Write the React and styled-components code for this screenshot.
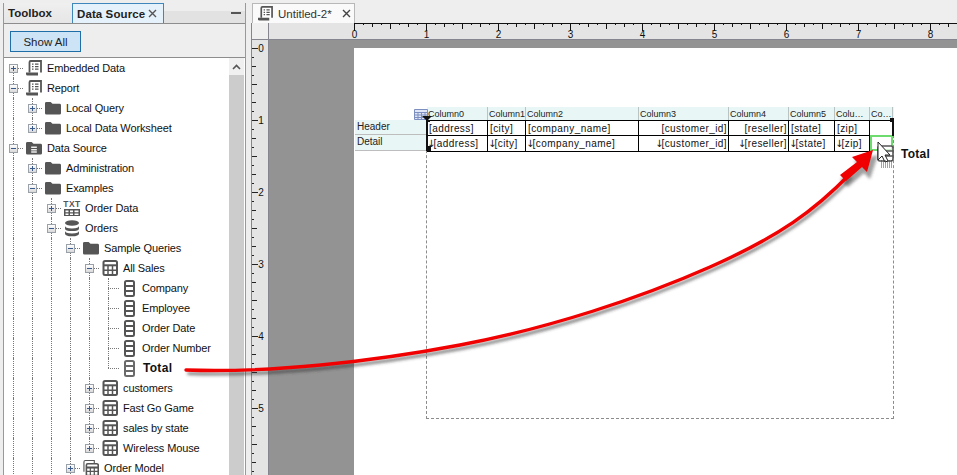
import React from "react";
import styled, { createGlobalStyle } from "styled-components";

const Global = createGlobalStyle`
  html, body { margin: 0; padding: 0; background: #eeeeee; }
  #root { width: 957px; height: 475px; overflow: hidden; }
`;

const INK = "#555555";

const Frame = styled.div`
  position: relative;
  width: 957px;
  height: 475px;
  display: flex;
  overflow: hidden;
  background: #eeeeee;
  font-family: "Liberation Sans", Arial, sans-serif;
  font-size: 11px;
  color: #111;
`;

const SidePanel = styled.section`
  width: 241px;
  margin: 3px 0 0 3px;
  display: flex;
  flex-direction: column;
  border-left: 1px solid #999;
  border-right: 1px solid #999;
`;

const PanelTabs = styled.div`
  height: 20px;
  flex: none;
  display: flex;
  border-bottom: 1px solid #8d8d8d;
  background: linear-gradient(#eeeeee 0 40%, #e2e2e2 40% 100%);
`;

const PanelTab = styled.div`
  display: flex;
  align-items: center;
  height: 20px;
  box-sizing: border-box;
  flex: none;
  white-space: nowrap;
  width: ${(p) => p.$w}px;
  padding: 0 6px 0 4px;
  font-size: 11.5px;
  font-weight: bold;
  letter-spacing: ${(p) => (p.$active ? 0.1 : 0)}px;
  color: #222;
  background: ${(p) => (p.$active ? "#e6f2fb" : "linear-gradient(#efefef,#e6e6e6)")};
  ${(p) => p.$active && "border: 1px solid #3f86ba; border-bottom: none;"}
  & > svg { margin-left: auto; }
`;

const PanelMin = styled.div`
  margin: 9px 4px 0 auto;
  width: 10px;
  height: 2px;
  background: #555;
`;

const Toolbar = styled.div`
  height: 34px;
  flex: none;
  padding: 7px 0 0 6px;
  box-sizing: border-box;
  border-bottom: 1px solid #8d8d8d;
  background: #eeeeee;
`;

const ShowAll = styled.button`
  display: block;
  width: 71px;
  height: 21px;
  padding: 0;
  box-sizing: border-box;
  border: 1px solid #1f6ea8;
  background: #cde4f7;
  font: 11.5px "Liberation Sans", Arial, sans-serif;
  color: #222;
`;

const TreeArea = styled.div`
  flex: 1;
  display: flex;
  min-height: 0;
  background: #fff;
`;

const TreeList = styled.ul`
  flex: 1;
  margin: 0;
  padding: 0;
  list-style: none;
  overflow: hidden;
`;

const Row = styled.li`
  position: relative;
  height: 20px;
  display: flex;
  align-items: center;
  padding-left: ${(p) => 22 + p.$level * 19}px;
  white-space: nowrap;
  font-size: ${(p) => (p.$bold ? 12 : 11)}px;
  letter-spacing: ${(p) => (p.$bold ? 0.3 : -0.12)}px;
  font-weight: ${(p) => (p.$bold ? "bold" : "normal")};
  color: #111;
`;

const Guide = styled.i`
  position: absolute;
  left: ${(p) => 9 + p.$level * 19}px;
  top: ${(p) => (p.$start ? 10 : 0)}px;
  height: ${(p) => (p.$half ? 10 : p.$start ? 10 : 20)}px;
  border-left: 1px dotted #777;
`;

const Connector = styled.i`
  position: absolute;
  left: ${(p) => 9 + p.$level * 19}px;
  top: 10px;
  width: ${(p) => (p.$leaf ? 11 : 10)}px;
  border-top: 1px dotted #777;
`;

const Expander = styled.span`
  position: absolute;
  left: ${(p) => 5 + p.$level * 19}px;
  top: 6px;
  width: 9px;
  height: 9px;
  box-sizing: border-box;
  border: 1px solid #9ba1a8;
  background: linear-gradient(#fff, #d9d9d9);
  &::before {
    content: "";
    position: absolute;
    left: 1px;
    top: 3px;
    width: 5px;
    height: 1px;
    background: #3a5a8c;
  }
  &::after {
    content: "";
    display: ${(p) => (p.$open ? "none" : "block")};
    position: absolute;
    left: 3px;
    top: 1px;
    width: 1px;
    height: 5px;
    background: #3a5a8c;
  }
`;

const IconSlot = styled.span`
  width: 16px;
  height: 18px;
  margin-right: ${(p) => (p.$wide ? 6 : 5)}px;
  display: flex;
  align-items: center;
  justify-content: center;
  flex: none;
`;

const Scrollbar = styled.div`
  width: 15px;
  margin-right: 1px;
  background: #cccccc;
  display: flex;
  flex-direction: column;
`;

const ScrollUp = styled.div`
  height: 17px;
  background: #f0f0f0;
  display: flex;
  align-items: center;
  justify-content: center;
`;

const MainPanel = styled.section`
  flex: 1;
  margin-left: 5px;
  display: flex;
  flex-direction: column;
  min-width: 0;
`;

const DocTabs = styled.div`
  height: 20px;
  flex: none;
  margin-top: 3px;
  display: flex;
  padding-left: 1px;
`;

const DocTab = styled.div`
  width: 103px;
  box-sizing: border-box;
  padding-left: 5px;
  display: flex;
  align-items: center;
  white-space: nowrap;
  background: #fafafa;
  border-top: 1px solid #b8b8b8;
  border-right: 1px solid #b8b8b8;
  border-left: 1px solid #b8b8b8;
`;

const DocTitle = styled.span`
  margin: 0 0 0 5px;
  color: #333;
  font-size: 11.5px;
`;

const DocClose = styled.span`
  margin: 0 3px 0 auto;
  display: flex;
`;

const Workspace = styled.div`
  flex: 1;
  display: grid;
  grid-template-columns: 17px 1fr;
  grid-template-rows: 17px 1fr;
  min-height: 0;
  border-left: 1px solid #85858f;
`;

const RulerCorner = styled.div`
  background: #efefef;
  border-right: 1px solid #85858f;
  border-bottom: 1px solid #85858f;
`;

const HorizontalRuler = styled.div`
  background: #e4e4e4;
  border-bottom: 1px solid #85858f;
  overflow: hidden;
`;

const VerticalRuler = styled.div`
  background: #e4e4e4;
  border-right: 1px solid #85858f;
  overflow: hidden;
`;

const Canvas = styled.div`
  background: #939393;
  padding: 8px 0 0 85px;
  min-height: 0;
  overflow: hidden;
`;

const Page = styled.div`
  background: #fff;
  height: 500px;
  display: grid;
  grid-template-columns: 72px 1fr;
`;

const BandLabels = styled.div`
  padding: 72px 0 0 1px;
`;

const BandLabel = styled.div`
  height: ${(p) => p.$h}px;
  box-sizing: border-box;
  background: #e8f6f6;
  border-bottom: 1px solid #bdbdbd;
  font-size: 10px;
  line-height: 14px;
  padding-left: 2px;
  color: #222;
`;

const ReportColumn = styled.div`
  padding-top: 59px;
  width: 468px;
`;

const ColumnHead = styled.div`
  position: relative;
  height: 13px;
  margin-left: 1px;
  display: grid;
  grid-template-columns: ${(p) => p.$cols};
  background: #e8f6f6;
`;

const ColumnName = styled.div`
  font-size: 9px;
  line-height: 15px;
  padding-left: 1px;
  border-right: 1px solid #b8c4c4;
  overflow: hidden;
  white-space: nowrap;
  color: #222;
`;

const BodyFrame = styled.div`
  position: relative;
  height: 299px;
  box-sizing: border-box;
  border-left: 1px dashed #8c8c8c;
  border-right: 1px dashed #8c8c8c;
  border-bottom: 1px dashed #8c8c8c;
`;

const DataGrid = styled.div`
  display: grid;
  grid-template-columns: ${(p) => p.$cols};
  border-top: 1px solid #000;
`;

const DataCell = styled.div`
  height: ${(p) => p.$h}px;
  box-sizing: border-box;
  border-bottom: 1px solid #000;
  border-right: ${(p) => (p.$last ? "none" : "1px solid #000")};
  font-size: 10px;
  line-height: 15px;
  letter-spacing: 0.42px;
  padding: 0 ${(p) => (p.$right ? 1 : 0)}px 0 2px;
  text-align: ${(p) => (p.$right ? "right" : "left")};
  white-space: nowrap;
  overflow: hidden;
  color: #111;
`;

const DownMark = styled.span`
  font-family: "DejaVu Sans", sans-serif;
  font-size: 10px;
  line-height: 0;
  margin-left: -2px;
  letter-spacing: -1.8px;
`;

const SelectedCell = styled(DataCell)`
  border: 2px solid #6ddb6d;
  margin: -1px 0 0 0;
  height: 16px;
`;

const Handle = styled.i`
  position: absolute;
  left: ${(p) => p.$x}px;
  top: ${(p) => p.$y}px;
  width: ${(p) => p.$w || 4}px;
  height: ${(p) => p.$h || 4}px;
  background: #111;
`;

const TableBadge = styled.span`
  position: absolute;
  left: -13px;
  top: 2px;
  display: flex;
`;

const Caret = styled.i`
  position: absolute;
  left: -5px;
  top: 9px;
  width: 0;
  height: 0;
  border-left: 5px solid transparent;
  border-right: 5px solid transparent;
  border-top: 5px solid #111;
`;

const DragLabel = styled.b`
  position: absolute;
  left: 901px;
  top: 147px;
  font-size: 12px;
  letter-spacing: 0.25px;
`;

const Overlay = styled.svg`
  position: absolute;
  left: 0;
  top: 0;
  pointer-events: none;
`;

const ReportIcon = ({ size = 16 }) => (
  <svg width={size} height={size} viewBox="0 0 16 16">
    <path d="M3.5 12.5V2.2Q3.5 1 4.7 1H15v11.5" fill="#fff" stroke={INK} strokeWidth="1.8" />
    <path d="M0 12.5h12v3H1.5Q0 15.5 0 14z" fill={INK} />
    <path d="M6 4.2h1.5M9 4.2h3.5M6 6.7h1.5M9 6.7h3.5M6 9.2h1.5M9 9.2h3.5" stroke={INK} strokeWidth="1.3" />
  </svg>
);

const FolderIcon = () => (
  <svg width="17" height="16" viewBox="0 0 17 16">
    <path d="M0 3q0-1.5 1.5-1.5h4.5l2 2h7.5q1.5 0 1.5 1.5v8.5q0 1.5-1.5 1.5h-14q-1.5 0-1.5-1.5z" fill={INK} />
  </svg>
);

const SourceIcon = () => (
  <svg width="17" height="16" viewBox="0 0 17 16">
    <path d="M0 3q0-1.5 1.5-1.5h4.5l2 2h7.5q1.5 0 1.5 1.5v8.5q0 1.5-1.5 1.5h-14q-1.5 0-1.5-1.5z" fill={INK} />
    <path d="M5.5 6.5h6v1.6h-6zM5.5 9h6v1.6h-6zM5.5 11.5h6V13h-6z" fill="#eee" />
  </svg>
);

const TxtIcon = () => (
  <svg width="18" height="18" viewBox="0 0 18 18" style={{ flex: "none" }}>
    <text x="9" y="7.5" textAnchor="middle" fontFamily="Liberation Sans" fontWeight="bold" fontSize="8.5" letterSpacing="0.5" fill={INK}>TXT</text>
    <path d="M1 10h16v7H1z" fill={INK} />
    <path d="M2.5 11.5h3v1.8h-3zM7 11.5h3v1.8H7zM11.5 11.5h4v1.8h-4zM2.5 14.5h3v1.4h-3zM7 14.5h3v1.4H7zM11.5 14.5h4v1.4h-4z" fill="#fff" />
  </svg>
);

const DbIcon = () => (
  <svg width="16" height="17" viewBox="0 0 16 17">
    <ellipse cx="8" cy="3" rx="7" ry="2.8" fill={INK} />
    <path d="M1 5.8q0 2.6 7 2.6t7-2.6v2.6q0 2.6-7 2.6T1 8.4z" fill={INK} />
    <path d="M1 10.8q0 2.6 7 2.6t7-2.6v2.6q0 2.8-7 2.8T1 13.4z" fill={INK} />
  </svg>
);

const TableIcon = () => (
  <svg width="16" height="16" viewBox="0 0 16 16">
    <rect x="1.5" y="1" width="13.5" height="14" rx="1.5" fill="#fff" stroke={INK} strokeWidth="2" />
    <path d="M1.5 5.3h13.5" stroke={INK} strokeWidth="2" />
    <path d="M1.5 10.2h13.5M6 5v10M10.5 5v10" stroke={INK} strokeWidth="1.5" />
  </svg>
);

const FieldIcon = ({ soft }) => (
  <svg width="11" height="17" viewBox="0 0 11 17">
    <rect x="1" y="1" width="9" height="15" rx="1.5" fill="#fff" stroke={soft ? "#6a6a6a" : INK} strokeWidth="2" />
    <path d="M1 6h9M1 11h9" stroke={soft ? "#6a6a6a" : INK} strokeWidth="1.8" />
  </svg>
);

const ModelIcon = () => (
  <svg width="17" height="18" viewBox="0 0 17 18">
    <path d="M1 13V2.5Q1 1 2.5 1H12v3" fill="none" stroke={INK} strokeWidth="1.2" />
    <rect x="3.6" y="4.5" width="12.6" height="12.6" rx="1.5" fill="#fff" stroke={INK} strokeWidth="1.7" />
    <path d="M3.6 8.5h12.6" stroke={INK} strokeWidth="2.2" />
    <path d="M3.6 12.5h12.6M7.8 8v9M12 8v9" stroke={INK} strokeWidth="1.3" />
  </svg>
);

const CloseIcon = ({ c = "#555" }) => (
  <svg width="9" height="9" viewBox="0 0 9 9" style={{ flex: "none" }}>
    <path d="M1 1l7 7M8 1L1 8" stroke={c} strokeWidth="1.4" />
  </svg>
);

const icons = {
  report: <ReportIcon />,
  folder: <FolderIcon />,
  source: <SourceIcon />,
  txt: <TxtIcon />,
  db: <DbIcon />,
  table: <TableIcon />,
  field: <FieldIcon />,
  soft: <FieldIcon soft />,
  model: <ModelIcon />,
};

const rows = [
  { level: 0, label: "Embedded Data", icon: "report", exp: "plus", first: true },
  { level: 0, label: "Report", icon: "report", exp: "minus" },
  { level: 1, label: "Local Query", icon: "folder", exp: "plus" },
  { level: 1, label: "Local Data Worksheet", icon: "folder", exp: "plus", last: true },
  { level: 0, label: "Data Source", icon: "source", exp: "minus" },
  { level: 1, label: "Administration", icon: "folder", exp: "plus" },
  { level: 1, label: "Examples", icon: "folder", exp: "minus" },
  { level: 2, label: "Order Data", icon: "txt", exp: "plus" },
  { level: 2, label: "Orders", icon: "db", exp: "minus" },
  { level: 3, label: "Sample Queries", icon: "folder", exp: "minus" },
  { level: 4, label: "All Sales", icon: "table", exp: "minus" },
  { level: 5, label: "Company", icon: "field" },
  { level: 5, label: "Employee", icon: "field" },
  { level: 5, label: "Order Date", icon: "field" },
  { level: 5, label: "Order Number", icon: "field" },
  { level: 5, label: "Total", icon: "soft", bold: true, last: true },
  { level: 4, label: "customers", icon: "table", exp: "plus" },
  { level: 4, label: "Fast Go Game", icon: "table", exp: "plus" },
  { level: 4, label: "sales by state", icon: "table", exp: "plus" },
  { level: 4, label: "Wireless Mouse", icon: "table", exp: "plus", last: true },
  { level: 3, label: "Order Model", icon: "model", exp: "plus" },
];

const TreeRow = ({ r }) => (
  <Row $level={r.level} $bold={r.bold}>
    {Array.from({ length: r.level }, (_, i) => (
      <Guide key={i} $level={i} />
    ))}
    <Guide $level={r.level} $half={r.last} $start={r.first} />
    <Connector $level={r.level} $leaf={!r.exp} />
    {r.exp && <Expander $level={r.level} $open={r.exp === "minus"} />}
    <IconSlot $wide={r.bold}>{icons[r.icon]}</IconSlot>
    {r.label}
  </Row>
);

const columnWidths = [61, 38, 113, 90, 60, 46, 35, 23];
const columnTemplate = columnWidths.map((w) => w + "px").join(" ");
const columnNames = ["Column0", "Column1", "Column2", "Column3", "Column4", "Column5", "Colu…", "Co…"];
const fields = [
  ["[address]"],
  ["[city]"],
  ["[company_name]"],
  ["[customer_id]", true],
  ["[reseller]", true],
  ["[state]"],
  ["[zip]"],
];

const tickLength = (i) => (i % 8 === 0 ? 6 : i % 4 === 0 ? 5 : i % 2 === 0 ? 4 : 2);

const TopRuler = () => {
  const ticks = [];
  for (let i = 0; i <= 76; i++) {
    const x = 85 + i * 9 + 0.5;
    const len = i % 8 === 0 ? 8 : i % 4 === 0 ? 6 : i % 2 === 0 ? 4 : 2;
    ticks.push(<path key={i} d={`M${x} 0v${len}`} stroke="#111" />);
  }
  const nums = Array.from({ length: 9 }, (_, i) => (
    <text key={i} x={85 + i * 72 + 0.5} y="15" textAnchor="middle" fontSize="10" fontFamily="Liberation Sans" fill="#111">{i}</text>
  ));
  return (
    <svg width="688" height="16" style={{ display: "block" }}>
      <path d="M85 0.5H688" stroke="#111" />
      {ticks}
      {nums}
    </svg>
  );
};

const SideRuler = () => {
  const ticks = [];
  for (let i = 0; i <= 48; i++) {
    const y = 8 + i * 9 + 0.5;
    ticks.push(<path key={i} d={`M0 ${y}h${tickLength(i)}`} stroke="#222" />);
  }
  const nums = Array.from({ length: 6 }, (_, i) => (
    <text key={i} x="9" y={8 + i * 72 + 4} textAnchor="middle" fontSize="10" fontFamily="Liberation Sans" fill="#111">{i}</text>
  ));
  return (
    <svg width="16" height="436" style={{ display: "block" }}>
      {ticks}
      {nums}
    </svg>
  );
};

const arrowPath = "M186 370C270 373 370 362 460 345S640 298 710 267S815 210 850 174";

export default function App() {
  return (
    <Frame>
      <Global />
      <SidePanel>
        <PanelTabs>
          <PanelTab $w={68}>Toolbox</PanelTab>
          <PanelTab $w={92} $active>
            Data Source
            <CloseIcon />
          </PanelTab>
          <PanelMin />
        </PanelTabs>
        <Toolbar>
          <ShowAll>Show All</ShowAll>
        </Toolbar>
        <TreeArea>
          <TreeList>
            {rows.map((r) => (
              <TreeRow key={r.label} r={r} />
            ))}
          </TreeList>
          <Scrollbar>
            <ScrollUp>
              <svg width="9" height="6" viewBox="0 0 9 6">
                <path d="M1 5l3.5-3.5L8 5" fill="none" stroke="#555" strokeWidth="1.6" />
              </svg>
            </ScrollUp>
          </Scrollbar>
        </TreeArea>
      </SidePanel>
      <MainPanel>
        <DocTabs>
          <DocTab>
            <ReportIcon size={15} />
            <DocTitle>Untitled-2*</DocTitle>
            <DocClose>
              <CloseIcon c="#444" />
            </DocClose>
          </DocTab>
        </DocTabs>
        <Workspace>
          <RulerCorner />
          <HorizontalRuler>
            <TopRuler />
          </HorizontalRuler>
          <VerticalRuler>
            <SideRuler />
          </VerticalRuler>
          <Canvas>
            <Page>
              <BandLabels>
                <BandLabel $h={15}>Header</BandLabel>
                <BandLabel $h={16}>Detail</BandLabel>
              </BandLabels>
              <ReportColumn>
                <ColumnHead $cols={columnTemplate}>
                  <TableBadge>
                    <svg width="14" height="11" viewBox="0 0 14 11">
                      <path d="M.5.5h13v10H.5z" fill="#dfe6f5" stroke="#7c8fc0" />
                      <path d="M.5 3.5h13M.5 6h13M.5 8.5h13M4 3v8M7.5 3v8M11 3v8" stroke="#7c8fc0" />
                    </svg>
                  </TableBadge>
                  <Caret />
                  {columnNames.map((n) => (
                    <ColumnName key={n}>{n}</ColumnName>
                  ))}
                </ColumnHead>
                <BodyFrame>
                  <DataGrid $cols={columnTemplate}>
                    {fields.map(([f, right]) => (
                      <DataCell key={f} $h={15} $right={right}>{f}</DataCell>
                    ))}
                    <DataCell $h={15} $last />
                    {fields.map(([f, right]) => (
                      <DataCell key={f} $h={16} $right={right}>
                        <DownMark>↓</DownMark>{f}
                      </DataCell>
                    ))}
                    <SelectedCell $h={16} $last />
                  </DataGrid>
                  <Handle $x={-1} $y={0} $w={4} $h={2} />
                  <Handle $x={-1} $y={0} $w={2} $h={30} />
                  <Handle $x={-1} $y={26} $w={5} $h={5} />
                  <Handle $x={463} $y={-2} $w={4} $h={4} />
                  <Handle $x={465} $y={-2} $w={2} $h={18} />
                </BodyFrame>
              </ReportColumn>
            </Page>
          </Canvas>
        </Workspace>
      </MainPanel>
      <Overlay width="957" height="475" viewBox="0 0 957 475">
        <defs>
          <filter id="soft" x="-10%" y="-30%" width="120%" height="160%">
            <feGaussianBlur stdDeviation="1.4" />
          </filter>
        </defs>
        <path d={arrowPath} fill="none" stroke="#333" strokeOpacity="0.6" strokeWidth="3" filter="url(#soft)" transform="translate(1.5 3.5)" />
        <path d="M852 158L876 152L868 176L862 170L846 184L838 177L856 163z" fill="#444" fillOpacity="0.5" filter="url(#soft)" transform="translate(2 3)" />
        <path d={arrowPath} fill="none" stroke="#f00000" strokeWidth="3.4" strokeLinecap="round" />
        <path d="M852 157L873 150L867 172L862 167L846 181L840 175L857 162z" fill="#f00000" />
        <path d="M880 146h11q2 0 2 2v11q0 2-2 2h-11q-2 0-2-2v-11q0-2 2-2z" fill="#fff" fillOpacity="0.7" stroke="#555" strokeWidth="1.6" />
        <path d="M878 151h15M878 156h15" stroke="#555" strokeWidth="1.4" />
        <path d="M878 142v18l4-4 3 6 3-1-3-6h5z" fill="#fff" stroke="#222" strokeWidth="1" />
        <path d="M881 161h12M881 163h12M881 165h12M881 167h12" stroke="#444" strokeDasharray="1 1" />
      </Overlay>
      <DragLabel>Total</DragLabel>
    </Frame>
  );
}
